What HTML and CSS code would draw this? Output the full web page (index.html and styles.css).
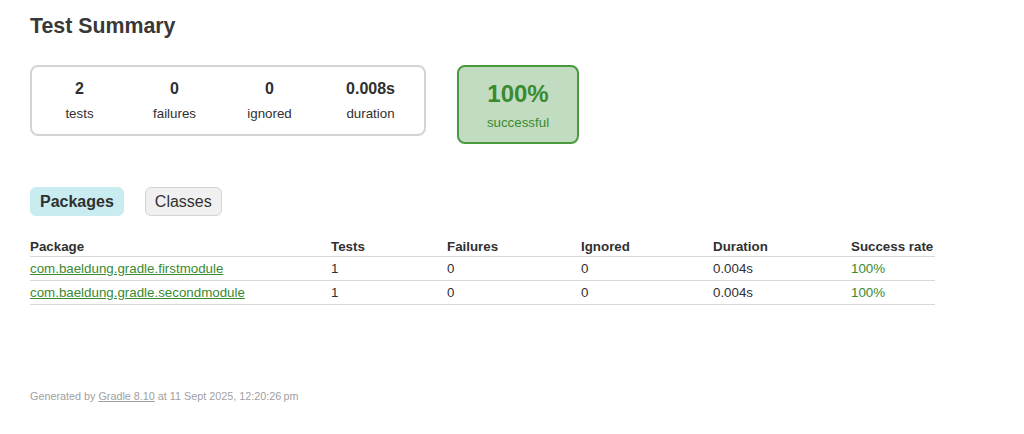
FILE: index.html
```html
<!DOCTYPE html>
<html>
<head>
	<title>Test results - Test Summary</title>
	<link rel="stylesheet" href="styles.css">
</head>
<body>
<div id="content">
	<h1>Test Summary</h1>
	<div id="summary">
		<div class="summaryGroup">
			<div class="infoBox">
				<div class="counter">2</div>
				<p>tests</p>
			</div>
			<div class="infoBox">
				<div class="counter">0</div>
				<p>failures</p>
			</div>
			<div class="infoBox">
				<div class="counter">0</div>
				<p>ignored</p>
			</div>
			<div class="infoBox wide">
				<div class="counter">0.008s</div>
				<p>duration</p>
			</div>
		</div>
		<div id="successRate" class="success">
			<div class="percent">100%</div>
			<p>successful</p>
		</div>
	</div>
	<ul class="tabLinks">
		<li class="selected">Packages</li>
		<li>Classes</li>
	</ul>
	<table>
		<thead>
			<tr>
				<th class="c1">Package</th>
				<th class="c2">Tests</th>
				<th class="c3">Failures</th>
				<th class="c4">Ignored</th>
				<th class="c5">Duration</th>
				<th class="c6">Success rate</th>
			</tr>
		</thead>
		<tbody>
			<tr>
				<td class="success"><a href="#">com.baeldung.gradle.firstmodule</a></td>
				<td>1</td>
				<td>0</td>
				<td>0</td>
				<td>0.004s</td>
				<td class="success">100%</td>
			</tr>
			<tr>
				<td class="success"><a href="#">com.baeldung.gradle.secondmodule</a></td>
				<td>1</td>
				<td>0</td>
				<td>0</td>
				<td>0.004s</td>
				<td class="success">100%</td>
			</tr>
		</tbody>
	</table>
	<div id="footer">
		<p>Generated by <a href="#">Gradle 8.10</a> at 11 Sept 2025, 12:20:26&#8239;pm</p>
	</div>
</div>
</body>
</html>
```
FILE: styles.css
```css
body {
	margin: 0;
	padding: 0;
	font-family: "Liberation Sans", Arial, sans-serif;
	font-size: 13.33px;
	color: #303030;
}
a, a:visited {
	color: #303030;
}
#content {
	padding: 14px 30px 0 30px;
}
h1 {
	font-size: 21.33px;
	color: #383838;
	margin: 0 0 26px 0;
}
#summary {
	display: flex;
	align-items: flex-start;
}
.summaryGroup {
	display: flex;
	border: solid 2px #d4d4d4;
	border-radius: 8px;
	padding: 13px 0 13px 0;
}
.infoBox {
	width: 95px;
	text-align: center;
}
.infoBox.wide {
	width: 107px;
}
.infoBox p, #successRate p {
	margin: 0;
}
.counter {
	font-size: 16px;
	font-weight: bold;
	margin-bottom: 8px;
}
#successRate {
	width: 118px;
	margin-left: 31px;
	text-align: center;
	border: solid 2px #4a9840;
	border-radius: 8px;
	padding: 12.5px 0 12px 0;
	background-color: #c1dcc1;
}
.percent {
	font-size: 24px;
	font-weight: bold;
	margin-bottom: 7px;
}
.success, .success a, .success a:visited {
	color: #3a8a30;
}
ul.tabLinks {
	display: flex;
	padding: 0;
	margin: 43px 0 18px 0;
}
ul.tabLinks li {
	list-style: none;
	font-size: 16px;
	padding: 5px 9px 4px 9px;
	border-radius: 6px;
	margin-right: 21px;
	border: solid 1px #d4d4d4;
	background-color: #f0f0f0;
}
ul.tabLinks li.selected {
	font-weight: bold;
	background-color: #c9ecf1;
	border-color: #c9ecf1;
}
table {
	border-collapse: collapse;
	width: 905px;
	table-layout: fixed;
}
th, td {
	text-align: left;
	padding: 4.2px 0;
}
th {
	padding: 5px 0 2px 0;
	border-bottom: solid 1px #d8d8d8;
}
td {
	border-bottom: solid 1px #d8d8d8;
}
.c1 { width: 301px; }
.c2 { width: 116px; }
.c3 { width: 134px; }
.c4 { width: 132px; }
.c5 { width: 138px; }
.c6 { width: 84px; }
#footer {
	margin-top: 85px;
	font-size: 10.8px;
	white-space: nowrap;
}
#footer p {
	margin: 0;
}
#footer, #footer a {
	color: #a0a0a0;
}
```
